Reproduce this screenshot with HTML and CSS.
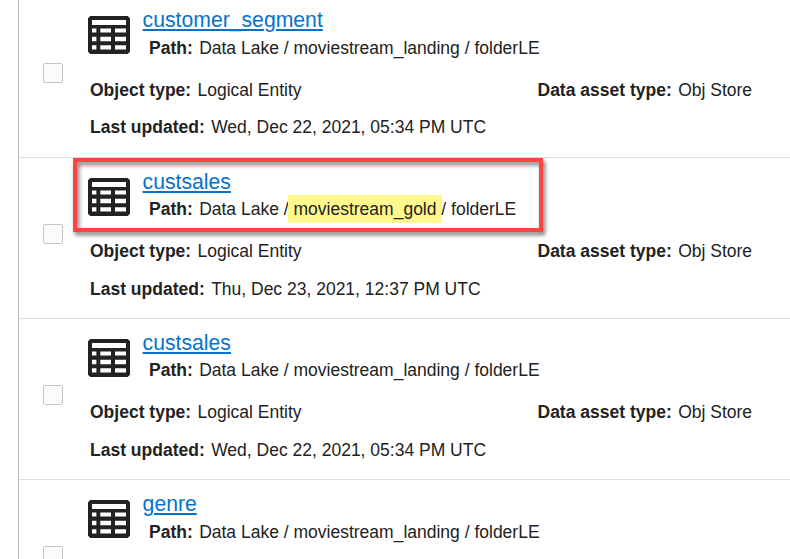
FILE: index.html
```html
<!DOCTYPE html>
<html lang="en">
<head>
<meta charset="utf-8">
<title>Data entities</title>
<link rel="stylesheet" href="styles.css">
</head>
<body>
<svg class="defs" aria-hidden="true">
  <symbol id="table" viewBox="0 0 42 38">
    <path fill="#222" fill-rule="evenodd" d="M2.3 0H39.7L42 2.3V35.7L39.7 38H2.3L0 35.7V2.3ZM4 4V9H38V4ZM4 12.4V16.6H8.4V12.4ZM12.3 12.4V16.6H23V12.4ZM27 12.4V16.6H38V12.4ZM4 20.8V25.2H8.4V20.8ZM12.3 20.8V25.2H23V20.8ZM27 20.8V25.2H38V20.8ZM4 29.3V33.6H8.4V29.3ZM12.3 29.3V33.6H23V29.3ZM27 29.3V33.6H38V29.3Z"/>
  </symbol>
</svg>
<main class="list">
  <article class="item first">
    <span class="check"></span>
    <div class="content">
      <header class="head">
        <svg class="icon"><use href="#table"/></svg>
        <div class="title"><a class="name" href="#">customer_segment</a>
          <p class="path"><b>Path:</b>Data Lake / moviestream_landing / folderLE</p></div>
      </header>
      <div class="facts"><p><b>Object type:</b>Logical Entity</p><p><b>Data asset type:</b>Obj Store</p></div>
      <p class="updated"><b>Last updated:</b>Wed, Dec 22, 2021, 05:34 PM UTC</p>
    </div>
  </article>
  <article class="item">
    <span class="check"></span>
    <div class="content">
      <header class="head">
        <svg class="icon"><use href="#table"/></svg>
        <div class="title"><a class="name" href="#">custsales</a>
          <p class="path"><b>Path:</b>Data Lake / <mark>moviestream_gold</mark> / folderLE</p></div>
      </header>
      <div class="facts"><p><b>Object type:</b>Logical Entity</p><p><b>Data asset type:</b>Obj Store</p></div>
      <p class="updated"><b>Last updated:</b>Thu, Dec 23, 2021, 12:37 PM UTC</p>
    </div>
    <span class="callout"></span>
  </article>
  <article class="item">
    <span class="check"></span>
    <div class="content">
      <header class="head">
        <svg class="icon"><use href="#table"/></svg>
        <div class="title"><a class="name" href="#">custsales</a>
          <p class="path"><b>Path:</b>Data Lake / moviestream_landing / folderLE</p></div>
      </header>
      <div class="facts"><p><b>Object type:</b>Logical Entity</p><p><b>Data asset type:</b>Obj Store</p></div>
      <p class="updated"><b>Last updated:</b>Wed, Dec 22, 2021, 05:34 PM UTC</p>
    </div>
  </article>
  <article class="item last">
    <span class="check"></span>
    <div class="content">
      <header class="head">
        <svg class="icon"><use href="#table"/></svg>
        <div class="title"><a class="name" href="#">genre</a>
          <p class="path"><b>Path:</b>Data Lake / moviestream_landing / folderLE</p></div>
      </header>
    </div>
  </article>
</main>
</body>
</html>
```
FILE: styles.css
```css
* { box-sizing: border-box; }
body {
  margin: 0;
  height: 559px;
  overflow: hidden;
  background: #fff;
  color: #222;
  font: 17.5px/20px "Liberation Sans", Arial, sans-serif;
  white-space: nowrap;
}
p { margin: 0; }
.defs { display: none; }
.list {
  height: 559px;
  margin-left: 18px;
  border-left: 1px solid #aeb6be;
  overflow: hidden;
}
.item {
  position: relative;
  display: flex;
  height: 161px;
  border-bottom: 1px solid #dcdddf;
}
/* The first row is scrolled partly out of view. */
.first { margin-top: -3px; }
.check {
  flex: none;
  width: 20px;
  height: 20px;
  margin: 66px 27px 0 24px;
  border: 1px solid #c5c5c5;
  border-radius: 2px;
  background: #fbfbfb;
}
.content { flex: 1; }
.head { display: flex; height: 83px; }
.icon {
  flex: none;
  width: 42px;
  height: 38px;
  margin: 20px 12.6px 0 -2px;
}
.title { padding-top: 12px; }
.name {
  display: block;
  width: max-content;
  height: 29px;
  font-size: 21.2px;
  line-height: 24px;
  color: #0572ce;
  text-decoration-thickness: 2px;
  text-underline-offset: 2px;
}
.path { padding-left: 6.4px; }
b { margin-right: 6.4px; }
mark {
  padding: 4px 6px;
  margin: 0 -6px;
  background: #fff88f;
  color: inherit;
}
.facts { display: grid; grid-template-columns: 447.5px auto; }
.updated { padding-top: 18px; }
.first .icon { margin-top: 19px; }
.first .title { padding-top: 11px; }
.first .name { height: 30px; }
.first .updated { padding-top: 17px; }
.last .name { height: 30px; }
.callout {
  position: absolute;
  left: 54px;
  top: 0;
  width: 470px;
  height: 74px;
  border: 4px solid #ff4343;
  filter: drop-shadow(2px 3px 2px rgba(0, 0, 0, .55));
}
```
